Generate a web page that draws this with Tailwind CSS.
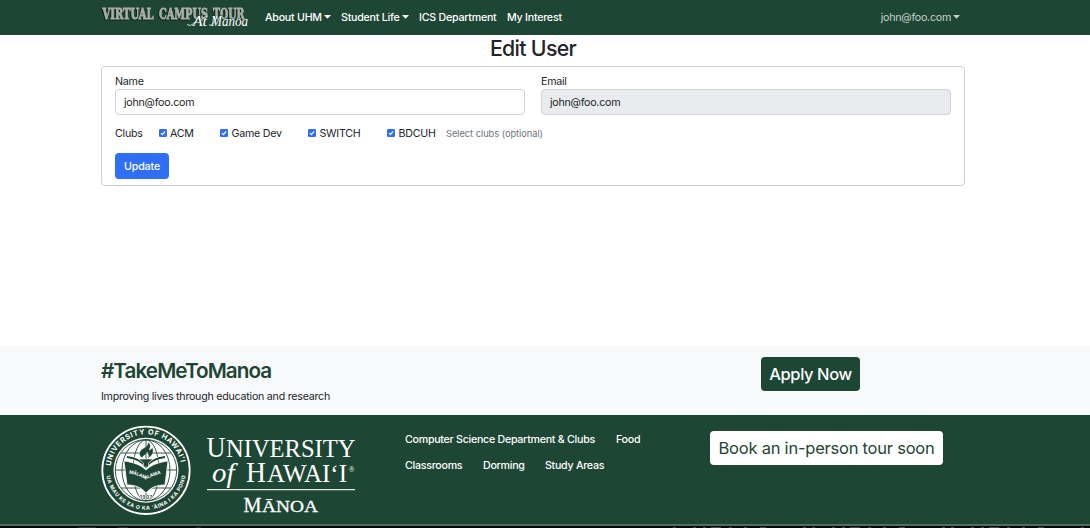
<!DOCTYPE html>
<html lang="en">
<head>
<meta charset="utf-8">
<title>Edit User</title>
<script src="https://cdn.jsdelivr.net/npm/@tailwindcss/browser@4"></script>
</head>
<body class="w-[1090px] h-[528px] overflow-hidden flex flex-col bg-white text-[#212529] text-[10.67px] leading-4 tracking-[-0.24px] font-['Inter',sans-serif]">
<nav class="h-[35px] shrink-0 bg-[#1e4634] pl-[101px] pr-[130px] flex items-center text-white font-medium">
  <svg class="w-[152px] h-[35px] shrink-0 tracking-normal" viewBox="0 0 152 35" role="img" aria-label="Virtual Campus Tour at Manoa">
    <g class="drop-shadow-[-1px_1px_0_#10281d]" font-family="'DejaVu Serif',serif" font-weight="700" font-size="15.500" fill="#a9aeab" stroke="#a9aeab" stroke-width=".9">
      <text x="1.500" y="19" textLength="51" lengthAdjust="spacingAndGlyphs">VIRTUAL</text>
      <text x="58" y="19" textLength="49" lengthAdjust="spacingAndGlyphs">CAMPUS</text>
      <text x="112" y="19" textLength="31.500" lengthAdjust="spacingAndGlyphs">TOUR</text>
    </g>
    <g font-family="'Liberation Serif',serif" font-style="italic" font-size="14" fill="#fff" stroke="#1e4634" stroke-width="1.2" paint-order="stroke">
      <text x="92" y="25.500" textLength="14" lengthAdjust="spacingAndGlyphs">At</text>
      <text x="110" y="25.500" textLength="37" lengthAdjust="spacingAndGlyphs">Manoa</text>
    </g>
    <path d="M86 24c2 3 7 1 11-6m9-1c-3-1-6 2-5 4m7 4c4 1 6-4 8-9" fill="none" stroke="#fff" stroke-width=".8"/>
  </svg>
  <a class="ml-3 w-[76px] shrink-0 whitespace-nowrap flex items-center">About UHM<svg class="ml-[2px] -mt-px w-[7px] h-[4px]" viewBox="0 0 7 4"><path d="M0 0h7L3.500 3.700z" fill="#fff"/></svg></a>
  <a class="w-[78px] shrink-0 whitespace-nowrap flex items-center">Student Life<svg class="ml-[2px] -mt-px w-[7px] h-[4px]" viewBox="0 0 7 4"><path d="M0 0h7L3.500 3.700z" fill="#fff"/></svg></a>
  <a class="w-[88px] shrink-0 whitespace-nowrap">ICS Department</a>
  <a class="whitespace-nowrap">My Interest</a>
  <a class="ml-auto flex items-center font-normal text-[#c7d1cc]">john@foo.com<svg class="ml-[2px] -mt-px w-[7px] h-[4px]" viewBox="0 0 7 4"><path d="M0 0h7L3.500 3.700z" fill="#c7d1cc"/></svg></a>
</nav>
<main class="h-[311px] shrink-0 pl-[101px] w-[965px]">
  <h1 class="h-[31px] text-center text-[21.3px] leading-[27px] font-medium tracking-[-0.68px]">Edit User</h1>
  <form class="h-[120px] border border-[#ced0d2] rounded-[4px] px-[13px] pt-[7px]">
    <div class="grid grid-cols-2 gap-4">
      <label class="block h-[41px]">Name
        <span class="-mt-px h-[26px] rounded-[4px] border border-[#ced4da] px-2 pt-[2px] flex items-center">john@foo.com</span></label>
      <label class="block h-[41px]">Email
        <span class="-mt-px h-[26px] rounded-[4px] border border-[#ced4da] bg-[#e9ebef] px-2 pt-[2px] flex items-center">john@foo.com</span></label>
    </div>
    <div class="mt-[11px] h-4 flex items-center">
      <span class="w-11">Clubs</span>
      <label class="w-[61px] flex items-center gap-[3px]"><svg class="size-2 shrink-0 -mt-[2px]" viewBox="0 0 8 8"><rect width="8" height="8" rx="1.3" fill="#2f6ff6"/><path d="M2 4.200 3.400 5.700 6.100 2.300" fill="none" stroke="#fff" stroke-width="1.200"/></svg>ACM</label>
      <label class="w-[88px] flex items-center gap-[3.5px]"><svg class="size-2 shrink-0 -mt-[2px]" viewBox="0 0 8 8"><rect width="8" height="8" rx="1.3" fill="#2f6ff6"/><path d="M2 4.200 3.400 5.700 6.100 2.300" fill="none" stroke="#fff" stroke-width="1.200"/></svg>Game Dev</label>
      <label class="w-[79px] flex items-center gap-[3.5px]"><svg class="size-2 shrink-0 -mt-[2px]" viewBox="0 0 8 8"><rect width="8" height="8" rx="1.3" fill="#2f6ff6"/><path d="M2 4.200 3.400 5.700 6.100 2.300" fill="none" stroke="#fff" stroke-width="1.200"/></svg>SWITCH</label>
      <label class="w-[59px] flex items-center gap-[3.5px]"><svg class="size-2 shrink-0 -mt-[2px]" viewBox="0 0 8 8"><rect width="8" height="8" rx="1.3" fill="#2f6ff6"/><path d="M2 4.200 3.400 5.700 6.100 2.300" fill="none" stroke="#fff" stroke-width="1.200"/></svg>BDCUH</label>
      <small class="text-[9.3px] tracking-[-0.05px] text-[#6c757d] whitespace-nowrap">Select clubs (optional)</small>
    </div>
    <button class="mt-[11px] block w-[54px] h-[26px] rounded-[4px] bg-[#2f6ff6] text-white font-medium tracking-[-0.15px] pt-px">Update</button>
  </form>
</main>
<section class="h-[69px] shrink-0 bg-[#f8f9fb] pl-[101px] flex">
  <div class="w-[660px] pt-3">
    <h2 class="text-[20.7px] leading-[26px] font-semibold text-[#1e4634] tracking-[-0.95px]">#TakeMeToManoa</h2>
    <p class="mt-[5px]">Improving lives through education and research</p>
  </div>
  <a class="mt-[11px] w-[99px] h-[34px] rounded-[4px] bg-[#1e4634] text-white text-[16.5px] tracking-[-0.4px] font-medium flex items-center justify-center whitespace-nowrap">Apply Now</a>
</section>
<footer class="h-[109px] shrink-0 bg-[#1e4634] pl-[101px] flex text-white">
  <svg class="w-[304px] h-[109px] shrink-0 tracking-normal" viewBox="101 415 304 109" role="img" aria-label="University of Hawaii Manoa">
    <defs>
      <path id="top" d="M110.800 466A35.400 35.400 0 0 1 181.200 466"/>
      <path id="bottom" d="M106.500 476A40 40 0 0 0 185.500 476"/>
      <path id="motto" d="M129 473.500q8 1 17 6 9-5 17-6"/>
    </defs>
    <circle cx="146" cy="470.300" r="43.700" fill="none" stroke="#fff" stroke-width="1.800"/>
    <circle cx="146" cy="470.300" r="32.500" fill="#fff"/>
    <g fill="none" stroke="#1e4634" stroke-width=".9">
      <circle cx="146" cy="470.300" r="30.700"/>
      <path d="M146 440v61M115 470h62M121 453h50M121 488h50"/>
      <ellipse cx="146" cy="470.300" rx="13" ry="30.500"/>
      <ellipse cx="146" cy="470.300" rx="24" ry="30.500"/>
    </g>
    <path d="M124 461c9 1 17 4 22 9 5-5 13-8 22-9l-3 24c-8 0-14 2-19 8-5-6-11-8-19-8z" fill="#1e4634" stroke="#fff" stroke-width=".8"/>
    <path d="M127 457c8 1 15 4 19 10 4-6 11-9 19-10" fill="none" stroke="#fff" stroke-width="3.500"/>
    <path d="M127 457c8 1 15 4 19 10 4-6 11-9 19-10M146 467v-7" fill="none" stroke="#1e4634" stroke-width="1.800"/>
    <path d="M138.500 459h15l-5 4v4h-5v-4z" fill="#1e4634" stroke="#fff" stroke-width=".6"/>
    <path d="M142 458c-5-4-2-8 2-10 3-2 4-3 4-6 4 3 2 6 1 8 3-1 3-2 3-3 3 5 0 9-4 11 1-3 0-5-1-6 0 3-4 3-5 6z" fill="#1e4634" stroke="#fff" stroke-width=".4"/>
    <g font-family="Inter,sans-serif" fill="#fff" font-weight="700">
      <text font-size="7.200"><textPath href="#top" textLength="100">UNIVERSITY OF HAWAIʻI</textPath></text>
      <text font-size="5.200"><textPath href="#bottom" textLength="113">UA MAU KE EA O KA ʻĀINA I KA PONO</textPath></text>
      <text font-size="4.600"><textPath href="#motto" textLength="34">MĀLAMALAMA</textPath></text>
      <text x="140" y="499" font-size="4.500" fill="#1e4634" stroke="#fff" stroke-width="1" paint-order="stroke" textLength="12">1907</text>
    </g>
    <g font-family="'Liberation Serif',serif" fill="#fff">
      <text x="206.500" y="456.700" font-size="28.500" textLength="19" lengthAdjust="spacingAndGlyphs">U</text>
      <text x="226" y="456.700" font-size="24.500" textLength="129.500" lengthAdjust="spacingAndGlyphs">NIVERSITY</text>
      <text x="212" y="481.700" font-size="28" font-style="italic" textLength="22.500" lengthAdjust="spacingAndGlyphs">of</text>
      <text x="246" y="481.700" font-size="28.500" textLength="20" lengthAdjust="spacingAndGlyphs">H</text>
      <text x="267" y="481.700" font-size="24.500" textLength="80" lengthAdjust="spacingAndGlyphs">AWAIʻI</text>
      <text x="348.700" y="471.700" font-size="7.500">®</text>
      <path d="M207 489.700h148" stroke="#dfe6e2" stroke-width="1.300"/>
      <g stroke="#fff" stroke-width=".3">
        <text x="243.500" y="511.500" font-size="21" textLength="18" lengthAdjust="spacingAndGlyphs">M</text>
        <text x="262" y="511.500" font-size="17.500" textLength="56" lengthAdjust="spacingAndGlyphs">ĀNOA</text>
      </g>
    </g>
  </svg>
  <div class="w-[305px] shrink-0 pt-[17px] flex flex-col gap-[10px] font-medium tracking-[-0.27px] whitespace-nowrap">
    <div class="flex"><a class="w-[211px]">Computer Science Department &amp; Clubs</a><a>Food</a></div>
    <div class="flex"><a class="w-[78px]">Classrooms</a><a class="w-[62px]">Dorming</a><a>Study Areas</a></div>
  </div>
  <a class="mt-4 w-[233px] h-[34px] rounded-[4px] bg-white text-[#1e4634] text-[16.5px] tracking-[-0.23px] flex items-center justify-center whitespace-nowrap">Book an in-person tour soon</a>
</footer>
<div class="h-[2px] shrink-0 bg-[#4d705e]"></div>
<svg class="h-[2px] w-full shrink-0 bg-[#08080a]" viewBox="0 0 1090 2"><path d="M78 1.500h18m22 0h10m68 0h5" stroke="#2c2c2e"/><path d="M673 1.500h417" stroke="#48484c" stroke-dasharray="3 17 3 7 3 5 10 8 3 12 3 13 6 37 3 6"/></svg>
</body>
</html>
